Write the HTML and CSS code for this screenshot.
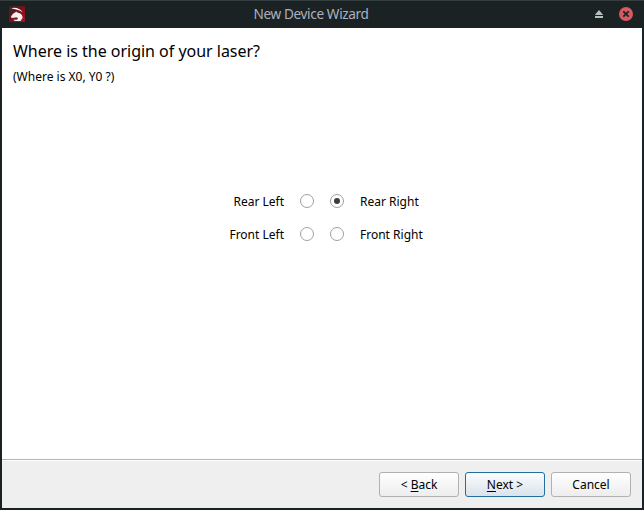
FILE: index.html
```html
<!DOCTYPE html>
<html lang="en">
<head>
<meta charset="utf-8">
<title>New Device Wizard</title>
<link rel="stylesheet" href="styles.css">
</head>
<body>
<div class="window">
  <header class="titlebar">
    <svg class="app-icon" viewBox="0 0 16 16" width="16" height="16">
      <defs><linearGradient id="red" x1="0" y1="0" x2="1" y2="1"><stop offset="0" stop-color="#30272a"/><stop offset=".5" stop-color="#7b1018"/><stop offset="1" stop-color="#b5121d"/></linearGradient></defs>
      <rect width="16" height="16" rx="1" fill="url(#red)"/>
      <path d="M2 2.200C6 .8 11 2 13.800 6.300C10.500 3.800 6 3.400 2 2.200Z" fill="#fff"/>
      <path d="M2 10.500L4 7.800L6 6.600L7.500 5.500L8 6.500C12 6.800 14 9.500 13.500 12L11.500 15H6.500C5 14.800 4.500 14 4.800 13.500C7 14.200 9 13.600 8.800 12.200C8.300 11 6.500 11.200 5 11.800L2.500 12Z" fill="#f6f2f2"/>
    </svg>
    <h1 class="title">New Device Wizard</h1>
    <div class="controls">
      <svg width="10" height="8" viewBox="0 0 10 8" fill="#b3c1bd"><path d="M5 0L9.200 5H.8Z"/><path d="M1 6H9V8H1Z"/></svg>
      <svg width="14" height="14" viewBox="0 0 14 14"><circle cx="7" cy="7" r="7" fill="#d65a62"/><path d="M4.300 4.300L9.700 9.700M9.700 4.300L4.300 9.700" stroke="#1c2426" stroke-width="1.800"/></svg>
    </div>
  </header>
  <main class="page">
    <h2 class="question">Where is the origin of your laser?</h2>
    <p class="hint">(Where is X0, Y0 ?)</p>
    <div class="origins">
      <span class="left">Rear Left</span><i class="radio"></i><i class="radio checked"></i><span class="right">Rear Right</span>
      <span class="left">Front Left</span><i class="radio"></i><i class="radio"></i><span class="right">Front Right</span>
    </div>
  </main>
  <footer class="footer">
    <button class="button">&lt; <u>B</u>ack</button>
    <button class="button primary"><u>N</u>ext &gt;</button>
    <button class="button">Cancel</button>
  </footer>
</div>
</body>
</html>
```
FILE: styles.css
```css
* { box-sizing: border-box; }
body { margin: 0; background: #1b2224; font: 12px/16px "Noto Sans", sans-serif; color: #000; }
.window { width: 644px; height: 510px; padding: 0 2px 2px; display: flex; flex-direction: column; background: #1b2224; border-top: 1px solid #353e40; }
.titlebar { height: 27px; flex: none; display: grid; grid-template-columns: 50px 1fr 70px; align-items: center; padding: 0 9px 2px 7px; }
.title { margin: 0; font-size: 13.6px; line-height: 18px; font-weight: 400; text-align: center; color: #a9b1c0; letter-spacing: -.36px; }
.controls { display: flex; justify-content: flex-end; align-items: center; gap: 15px; }
.page { flex: 1; background: #fff; padding: 12px 11px; }
.question { margin: 0; font-size: 16px; line-height: 22px; font-weight: 400; letter-spacing: -.02px; }
.hint { margin: 7px 0 0; }
.origins { display: grid; grid-template-columns: 85px 14px 14px 85px; column-gap: 16px; row-gap: 15px; margin: 107px 0 0 186px; align-items: center; }
.left, .right { line-height: 16px; padding-top: 2px; white-space: nowrap; }
.left { text-align: right; }
.radio { width: 14px; height: 14px; border: 1px solid #a0a0a0; border-radius: 50%; background: #fff; display: grid; place-items: center; }
.checked::after { content: ""; width: 6px; height: 6px; border-radius: 50%; background: #3b3c3d; }
.footer { height: 49px; flex: none; background: #efefef; border-top: 1px solid #b4b4b4; box-shadow: inset 0 1px #fff; padding: 12px 11px 11px; display: flex; justify-content: flex-end; gap: 6px; }
.button { width: 80px; height: 25px; padding: 0; border: 1px solid #b1b1b1; border-radius: 3px; background: linear-gradient(#fff, #ededed); font: inherit; color: #000; }
.primary { border-color: #216f9e; background: linear-gradient(#fbfcfd, #d9e3ea); }
.button u { text-underline-offset: 2px; text-decoration-thickness: 1px; text-decoration-skip-ink: none; }
```
